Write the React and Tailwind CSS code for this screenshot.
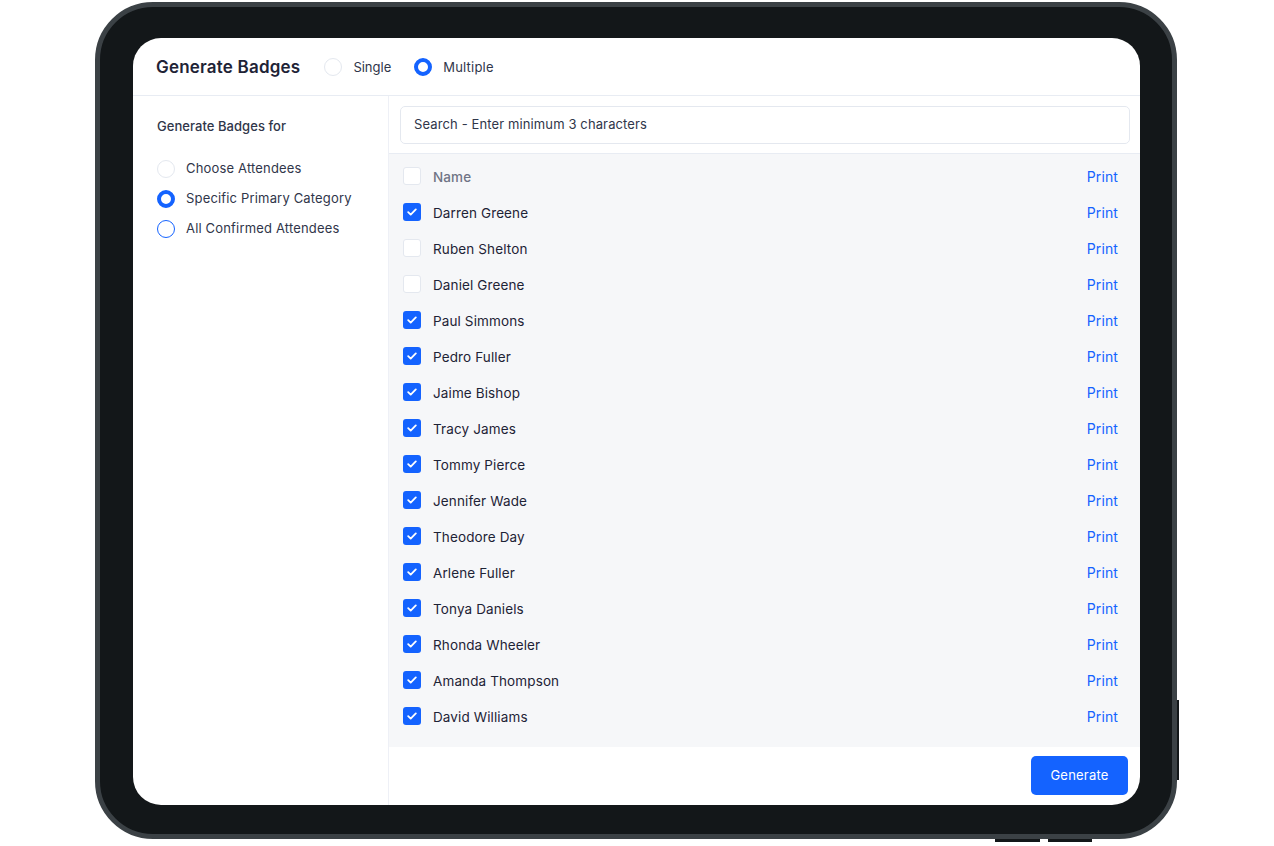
import { useState } from 'react'

const people = [
  ['Darren Greene', true],
  ['Ruben Shelton', false],
  ['Daniel Greene', false],
  ['Paul Simmons', true],
  ['Pedro Fuller', true],
  ['Jaime Bishop', true],
  ['Tracy James', true],
  ['Tommy Pierce', true],
  ['Jennifer Wade', true],
  ['Theodore Day', true],
  ['Arlene Fuller', true],
  ['Tonya Daniels', true],
  ['Rhonda Wheeler', true],
  ['Amanda Thompson', true],
  ['David Williams', true],
]

function Radio({ state }) {
  if (state === 'on') return <span className="block w-[18px] h-[18px] shrink-0 rounded-full border-[4px] border-[#1463ff] bg-white" />
  if (state === 'outline') return <span className="block w-[18px] h-[18px] shrink-0 rounded-full border border-[#1463ff] bg-white" />
  return <span className="block w-[18px] h-[18px] shrink-0 rounded-full border border-[#e4e8ef] bg-white" />
}

function Checkbox({ checked }) {
  if (!checked) return <span className="block w-[18px] h-[18px] shrink-0 rounded-[3px] border border-[#e4e8ef] bg-white" />
  return (
    <span className="w-[18px] h-[18px] shrink-0 rounded-[3px] bg-[#1463ff] flex items-center justify-center">
      <svg width="10" height="8" viewBox="0 0 10 8" fill="none">
        <path d="M1.2 4.2 3.7 6.6 8.8 1.4" stroke="white" strokeWidth="1.8" strokeLinecap="round" strokeLinejoin="round" />
      </svg>
    </span>
  )
}

function Row({ name, checked, header }) {
  return (
    <div className="h-9 flex items-center pl-[14px] pr-[22px]">
      <div className="-mt-[2px]"><Checkbox checked={checked} /></div>
      <span className={`ml-3 text-[13.5px] leading-5 tracking-[0.12px] ${header ? 'text-[#6f7485] font-medium' : 'text-[#1e2336]'}`}>{name}</span>
      <span className="ml-auto text-[14px] leading-5 tracking-[0.1px] text-[#1463ff]">Print</span>
    </div>
  )
}

export default function App() {
  const [query, setQuery] = useState('')

  return (
    <div className="w-[1274px] h-[846px] bg-white overflow-hidden pt-[2px] pl-[95px] font-['Inter',sans-serif]">
      <div className="relative w-[1082px] h-[837px] rounded-[58px] border-[5px] border-[#3b4145] bg-[#131719] pt-[31px] pl-[33px]">
        <span className="absolute -right-[7px] top-[693px] w-[2px] h-[80px] bg-[#131719]" />
        <span className="absolute left-[895px] -bottom-[8px] w-[45px] h-[3px] bg-[#131719]" />
        <span className="absolute left-[948px] -bottom-[8px] w-[44px] h-[3px] bg-[#131719]" />

        <div className="w-[1007px] h-[767px] rounded-[28px] bg-white overflow-hidden flex flex-col">
          <header className="h-[58px] shrink-0 border-b border-[#e8ecf3] flex items-center pl-[23px] pt-[1px]">
            <h1 className="pt-[2px] text-[17px] font-semibold tracking-[0.2px] text-[#1e2336]">Generate Badges</h1>
            <div className="ml-6 flex items-center gap-[11px]">
              <Radio />
              <span className="pt-[2px] text-[13px] text-[#30364a]">Single</span>
            </div>
            <div className="ml-[23px] flex items-center gap-[11px]">
              <Radio state="on" />
              <span className="pt-[2px] text-[13px] tracking-[0.2px] text-[#30364a]">Multiple</span>
            </div>
          </header>

          <div className="flex flex-1 min-h-0">
            <aside className="w-[256px] shrink-0 border-r border-[#eef0f6] pl-6 pt-5">
              <h2 className="text-[13px] font-medium tracking-[0.05px] text-[#30364a] leading-5">Generate Badges for</h2>
              <ul className="mt-[24px] flex flex-col gap-3">
                {[['Choose Attendees'], ['Specific Primary Category', 'on'], ['All Confirmed Attendees', 'outline']].map(([label, state]) => (
                  <li key={label} className="h-[18px] flex items-center gap-[11px]">
                    <Radio state={state} />
                    <span className="text-[13px] tracking-[0.17px] text-[#30364a]">{label}</span>
                  </li>
                ))}
              </ul>
            </aside>

            <main className="flex-1 min-w-0 flex flex-col">
              <div className="h-[58px] shrink-0 border-b border-[#e8ecf3] pl-[11px] pr-[10px] pt-[10px]">
                <input
                  value={query}
                  onChange={e => setQuery(e.target.value)}
                  placeholder="Search - Enter minimum 3 characters"
                  className="w-full h-[38px] rounded-[5px] border border-[#e4e8ef] bg-white px-[13px] pb-[2px] text-[13px] tracking-[0.12px] text-[#1e2336] placeholder:text-[#30364a] outline-none"
                />
              </div>
              <div className="flex-1 bg-[#f6f7f9] pt-[5px]">
                <Row name="Name" header />
                {people.map(([name, checked]) => <Row key={name} name={name} checked={checked} />)}
              </div>
              <div className="h-[58px] shrink-0 flex items-start justify-end pt-[9px] pr-3">
                <button className="w-[97px] h-[39px] rounded-[5px] bg-[#1463ff] text-white text-[13px] tracking-[0.2px]">Generate</button>
              </div>
            </main>
          </div>
        </div>
      </div>
    </div>
  )
}
